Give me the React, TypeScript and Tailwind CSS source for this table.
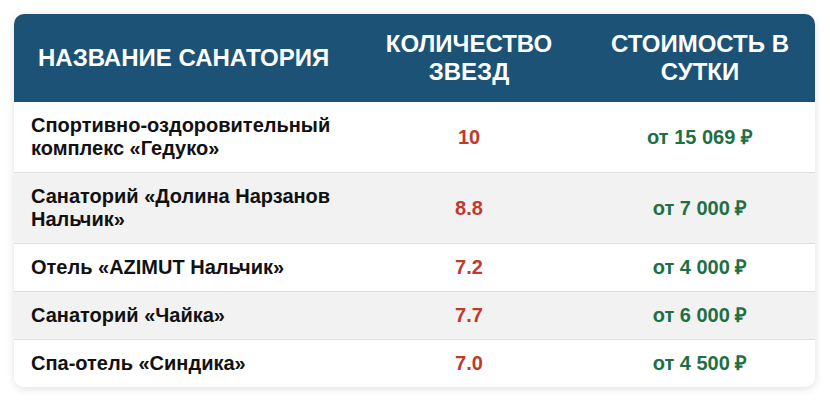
const rows = [
  { name: 'Спортивно-оздоровительный комплекс «Гедуко»', stars: '10', price: 'от 15 069 ₽' },
  { name: 'Санаторий «Долина Нарзанов Нальчик»', stars: '8.8', price: 'от 7 000 ₽' },
  { name: 'Отель «AZIMUT Нальчик»', stars: '7.2', price: 'от 4 000 ₽' },
  { name: 'Санаторий «Чайка»', stars: '7.7', price: 'от 6 000 ₽' },
  { name: 'Спа-отель «Синдика»', stars: '7.0', price: 'от 4 500 ₽' },
]

export default function App() {
  return (
    <div className="min-h-screen bg-white p-[14px] font-[Liberation_Sans,Arial,sans-serif]">
      <div className="w-[801px] overflow-hidden rounded-[10px] shadow-[0_2px_8px_rgba(0,0,0,0.12)]">
        <table className="w-full border-collapse table-fixed">
          <colgroup>
            <col className="w-[339px]" />
            <col className="w-[232px]" />
            <col className="w-[230px]" />
          </colgroup>
          <thead>
            <tr className="bg-[#1b5276] text-white text-[24px] font-bold uppercase leading-[28px]">
              <th className="pl-6 pr-2 py-4 text-left whitespace-nowrap">Название санатория</th>
              <th className="px-6 py-4 text-center">Количество звезд</th>
              <th className="px-6 py-4 text-center">Стоимость в сутки</th>
            </tr>
          </thead>
          <tbody>
            {rows.map((r, i) => (
              <tr
                key={r.name}
                className={`${i % 2 === 1 ? 'bg-[#f2f2f2]' : 'bg-white'} ${i < rows.length - 1 ? 'border-b border-[#dddddd]' : ''} text-[20px] font-bold leading-[23px]`}
              >
                <td className="px-[17px] py-3 text-[#111111]">{r.name}</td>
                <td className="px-4 py-3 text-center text-[#c0392b]">{r.stars}</td>
                <td className="px-4 py-3 text-center text-[#1e6f43]">{r.price}</td>
              </tr>
            ))}
          </tbody>
        </table>
      </div>
    </div>
  )
}
